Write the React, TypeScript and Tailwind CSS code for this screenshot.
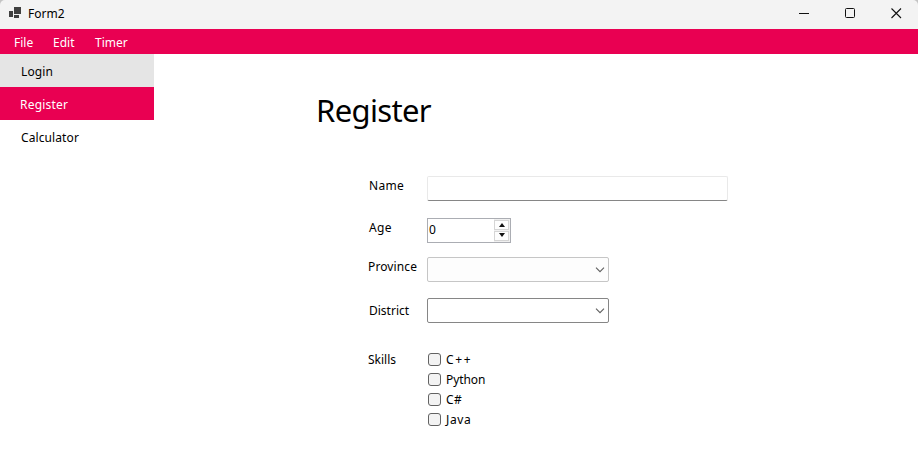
import React from 'react';

function TitleBar() {
  return (
    <header className="bg-[#c4c4c4]">
      <div className="flex h-[29px] items-start rounded-t-[5px] bg-[#f3f3f3]">
        <svg className="mt-[7px] ml-[9px] h-3 w-3" viewBox="0 0 12 12" shapeRendering="crispEdges" fill="#404040">
          <rect x="5" y="0" width="7" height="7" />
          <rect x="0" y="4" width="4" height="6" />
          <rect x="5" y="8" width="5" height="3" />
        </svg>
        <span className="mt-[5px] ml-[7px] text-[12px] leading-[18px]">Form2</span>
        <div className="mt-2 mr-4 ml-auto flex gap-[35px]">
          <svg className="h-[11px] w-[11px]" viewBox="0 0 11 11" fill="none" stroke="#111">
            <path d="M0 5.5H10" />
          </svg>
          <svg className="h-[11px] w-[11px]" viewBox="0 0 11 11" fill="none" stroke="#111">
            <rect x=".5" y=".5" width="9" height="9" rx="1" />
          </svg>
          <svg className="h-[11px] w-[11px]" viewBox="0 0 11 11" fill="none" stroke="#111" strokeWidth="1.1">
            <path d="M.5.5l9.5 9.5M10 .5L.5 10" />
          </svg>
        </div>
      </div>
    </header>
  );
}

function Caret() {
  return (
    <svg className="mr-[3px] h-[6px] w-[10px]" viewBox="0 0 10 6" fill="none" stroke="#606060" strokeWidth="1.1">
      <path d="M1 .7L5 4.7L9 .7" />
    </svg>
  );
}

function Row({ label, className, labelClass, children }: { label: string; className: string; labelClass: string; children: React.ReactNode }) {
  return (
    <div className={`flex items-start ${className}`}>
      <div className="w-[273px] shrink-0">
        <span className={`block leading-[18px] whitespace-nowrap ${labelClass}`}>{label}</span>
      </div>
      {children}
    </div>
  );
}

const skills = [
  { name: 'C++', tracking: 'tracking-[1.6px]' },
  { name: 'Python', tracking: 'tracking-[-0.1px]' },
  { name: 'C#', tracking: 'tracking-[0.3px]' },
  { name: 'Java', tracking: 'tracking-[0.6px]' },
];

export default function App() {
  return (
    <div className="flex h-[475px] w-[918px] flex-col overflow-hidden bg-white font-['Noto_Sans',sans-serif] text-[12px] text-black">
      <TitleBar />
      <nav className="flex h-[25px] bg-[#e90052] pt-[5px] pl-[14px] leading-[18px] text-white">
        <span className="w-[39px]">File</span>
        <span className="w-[42px]">Edit</span>
        <span>Timer</span>
      </nav>
      <div className="flex flex-1">
        <aside className="w-[154px] shrink-0">
          <div className="h-[33px] bg-[#e5e5e5] pt-[9px] pl-[21px] leading-[18px] tracking-[0.1px]">Login</div>
          <div className="h-[33px] bg-[#e90052] pt-[9px] pl-5 leading-[18px] tracking-[0.2px] text-white">Register</div>
          <div className="h-[33px] pt-[9px] pl-[21px] leading-[18px] tracking-[0.1px]">Calculator</div>
        </aside>
        <main className="flex-1">
          <h1 className="mt-[34px] ml-[162px] h-[88px] text-[31px] leading-[44px] tracking-[-0.65px]">Register</h1>
          <Row label="Name" className="h-[42px]" labelClass="pt-px pl-[215px] tracking-[0.3px]">
            <div className="h-[25px] w-[301px] rounded-[2px] border border-[#e9e9e9] border-b-[#868686]" />
          </Row>
          <Row label="Age" className="h-[39px]" labelClass="pt-px pl-[215px] tracking-[0.3px]">
            <div className="flex h-[25px] w-[84px] justify-between border border-[#abadb3]">
              <span className="pt-[2px] pl-px leading-[18px]">0</span>
              <div className="flex w-4 flex-col bg-[#f0f0f0] py-px pr-px">
                <div className="flex h-[10px] items-center justify-center border border-[#d5d5d5] bg-[#fdfdfd]">
                  <svg className="h-1 w-[6px]" viewBox="0 0 6 4"><path d="M3 0L6 4H0z" fill="#111" /></svg>
                </div>
                <div className="mt-px flex h-[10px] items-start justify-center border border-[#d5d5d5] bg-[#fdfdfd] pt-px">
                  <svg className="h-1 w-[6px]" viewBox="0 0 6 4"><path d="M0 0H6L3 4z" fill="#111" /></svg>
                </div>
              </div>
            </div>
          </Row>
          <Row label="Province" className="h-[41px]" labelClass="pt-px pl-[214px] tracking-[0.12px]">
            <div className="flex h-[25px] w-[182px] items-center justify-end rounded-[2px] border border-[#c6c6c6] bg-[#fdfdfd]"><Caret /></div>
          </Row>
          <Row label="District" className="h-[52px]" labelClass="pt-1 pl-[215px]">
            <div className="flex h-[25px] w-[182px] items-center justify-end rounded-[2px] border border-[#868686]"><Caret /></div>
          </Row>
          <Row label="Skills" className="" labelClass="pt-px pl-[214px]">
            <div className="flex flex-col pl-px">
              {skills.map((skill) => (
                <div key={skill.name} className="flex h-5 items-start">
                  <span className="mt-[3px] h-[13px] w-[13px] rounded-[3px] border border-[#626262] bg-[#f3f3f3]" />
                  <span className={`mt-px ml-[5px] leading-[18px] ${skill.tracking}`}>{skill.name}</span>
                </div>
              ))}
            </div>
          </Row>
        </main>
      </div>
    </div>
  );
}
